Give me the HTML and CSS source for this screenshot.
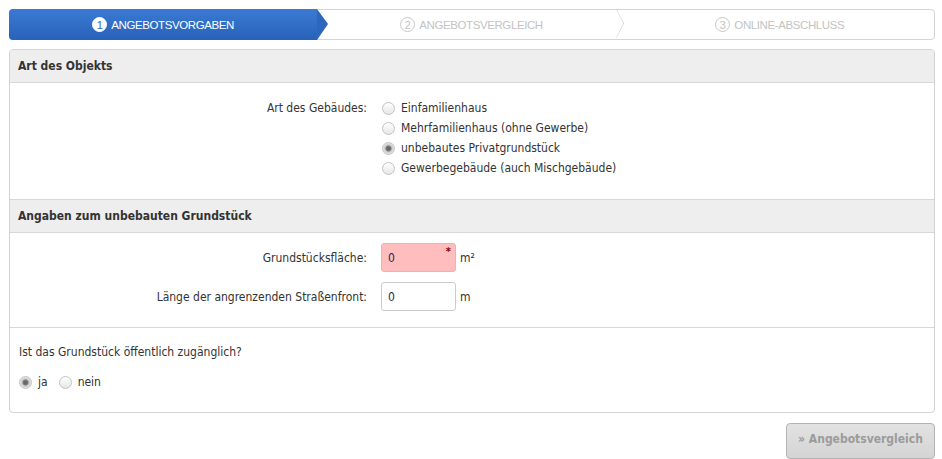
FILE: index.html
```html
<!DOCTYPE html>
<html lang="de">
<head>
    <meta charset="UTF-8">
    <title>Angebotsvorgaben</title>
    <link rel="stylesheet" href="styles.css">
</head>
<body>
    <div class="page">
        <div class="steps">
            <div class="step step-active"><span class="step-num">1</span>ANGEBOTSVORGABEN</div>
            <div class="step step-next"><span class="step-num">2</span>ANGEBOTSVERGLEICH</div>
            <div class="step"><span class="step-num">3</span>ONLINE-ABSCHLUSS</div>
        </div>

        <div class="panel">
            <div class="panel-head">Art des Objekts</div>
            <div class="panel-body body-objekt">
                <div class="form-row">
                    <div class="form-label">Art des Gebäudes:</div>
                    <div class="radio-list">
                        <label class="radio"><input type="radio" name="art">Einfamilienhaus</label>
                        <label class="radio"><input type="radio" name="art">Mehrfamilienhaus (ohne Gewerbe)</label>
                        <label class="radio"><input type="radio" name="art" checked>unbebautes Privatgrundstück</label>
                        <label class="radio"><input type="radio" name="art">Gewerbegebäude (auch Mischgebäude)</label>
                    </div>
                </div>
            </div>

            <div class="panel-head">Angaben zum unbebauten Grundstück</div>
            <div class="panel-body body-grund">
                <div class="form-row input-row">
                    <div class="form-label">Grundstücksfläche:</div>
                    <div class="field field-error">
                        <input type="text" value="0">
                        <span class="required">*</span>
                    </div>
                    <span class="unit">m²</span>
                </div>
                <div class="form-row input-row">
                    <div class="form-label">Länge der angrenzenden Straßenfront:</div>
                    <div class="field">
                        <input type="text" value="0">
                    </div>
                    <span class="unit">m</span>
                </div>
            </div>

            <div class="panel-body body-frage">
                <p class="frage">Ist das Grundstück öffentlich zugänglich?</p>
                <div class="radio-inline">
                    <label class="radio"><input type="radio" name="offen" checked>ja</label>
                    <label class="radio"><input type="radio" name="offen">nein</label>
                </div>
            </div>
        </div>

        <div class="actions">
            <button class="btn-next" disabled>» Angebotsvergleich</button>
        </div>
    </div>
</body>
</html>
```

FILE: styles.css
```css
body {
    margin: 0;
    font-family: "DejaVu Sans", Verdana, sans-serif;
    font-stretch: condensed;
    font-size: 12px;
    color: #333;
    background: #fff;
}
.page {
    padding: 9px 7px 0 9px;
}

/* Schritte oben */
.steps {
    display: flex;
    height: 29px;
    border: 1px solid #d4d4d4;
    border-radius: 4px;
}
.step {
    position: relative;
    flex: 1;
    display: flex;
    align-items: center;
    justify-content: center;
    color: #c4c4c4;
    font-family: "Liberation Sans", Arial, sans-serif;
    font-size: 11.5px;
    letter-spacing: -0.4px;
}
.step-num {
    display: inline-flex;
    align-items: center;
    justify-content: center;
    width: 13px;
    height: 13px;
    margin-right: 4px;
    border: 1px solid #c8c8c8;
    border-radius: 50%;
    font-size: 11px;
    letter-spacing: 0;
}
.step-active {
    color: #fff;
    margin: -1px 0 -1px -1px;
    background: linear-gradient(#3b7ad3, #2862b9);
    border-radius: 4px 0 0 4px;
}
.step-active .step-num {
    background: #fff;
    color: #2c66bd;
    border-color: #fff;
}
.step-active::after {
    content: "";
    position: absolute;
    right: -11px;
    top: 0;
    border-top: 15px solid transparent;
    border-bottom: 16px solid transparent;
    border-left: 11px solid #2c66bd;
    z-index: 1;
}
.step-next::after {
    content: "";
    position: absolute;
    right: -1px;
    top: 3px;
    width: 20px;
    height: 20px;
    border-top: 1px solid #d4d4d4;
    border-right: 1px solid #d4d4d4;
    transform: scaleX(0.5) rotate(45deg);
    transform-origin: center;
}

/* Panel */
.panel {
    margin-top: 9px;
    border: 1px solid #d4d4d4;
    border-radius: 4px;
    overflow: hidden;
}
.panel-head {
    height: 32px;
    line-height: 32px;
    padding-left: 8px;
    background: #eeeeee;
    border-bottom: 1px solid #d8d8d8;
    font-weight: bold;
    color: #333;
}
.panel-body {
    border-bottom: 1px solid #d8d8d8;
}
.panel-body:last-child {
    border-bottom: none;
}
.body-objekt {
    padding: 15px 0 21px;
}
.body-grund {
    padding: 10px 0 16px;
}
.body-frage {
    padding: 14px 9px 20px;
}

.form-row {
    display: flex;
    align-items: flex-start;
}
.form-label {
    width: 357px;
    margin-right: 14px;
    text-align: right;
    line-height: 20px;
}
.input-row {
    align-items: center;
    margin-bottom: 10px;
}
.input-row:last-child {
    margin-bottom: 0;
}

/* Radios */
.radio {
    display: flex;
    align-items: center;
    height: 20px;
    cursor: pointer;
}
.radio input {
    appearance: none;
    width: 13px;
    height: 13px;
    margin: 0 6px 0 1px;
    border: 1px solid #c2c2c2;
    border-radius: 50%;
    background: linear-gradient(#ffffff, #e6e6e6);
}
.radio input:checked {
    background: radial-gradient(circle, #5a5a5a 0, #7a7a7a 2.5px, #c9c9c9 3.5px, #ececec 6px);
}
.radio-inline {
    display: flex;
    gap: 11px;
    margin-top: 10px;
}
.radio-inline .radio input {
    margin-left: 0;
}
.frage {
    margin: 0;
    line-height: 20px;
}

/* Eingabefelder */
.field {
    position: relative;
}
.field input {
    box-sizing: border-box;
    width: 75px;
    height: 29px;
    padding: 0 6px;
    border: 1px solid #cccccc;
    border-radius: 3px;
    font-family: inherit;
    font-stretch: condensed;
    font-size: 12px;
    color: #1f2a55;
}
.field-error input {
    background: #ffbdbd;
    border-color: #efb0b0;
}
.required {
    position: absolute;
    top: 2px;
    right: 5px;
    color: #8b0000;
    font-size: 11px;
    font-weight: bold;
}
.unit {
    margin-left: 4px;
}

/* Button */
.actions {
    display: flex;
    justify-content: flex-end;
    margin-top: 10px;
}
.btn-next {
    width: 149px;
    height: 36px;
    padding: 0 0 4px;
    border: 1px solid #b4b4b4;
    border-radius: 4px;
    background: linear-gradient(#e2e2e2, #d4d4d4);
    color: #9b9b9b;
    font-family: "DejaVu Sans", Verdana, sans-serif;
    font-stretch: condensed;
    font-size: 12px;
    font-weight: bold;
}
```
